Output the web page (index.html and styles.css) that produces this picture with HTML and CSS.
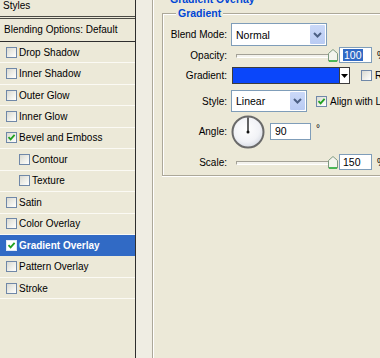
FILE: index.html
```html
<!DOCTYPE html>
<html>
<head>
<meta charset="utf-8">
<link rel="stylesheet" href="styles.css">
</head>
<body>
<div class="dialog">
  <aside class="styles">
    <div class="styles-head">Styles</div>
    <div class="blend-opts">Blending Options: Default</div>
    <ul class="fx-list">
      <li class="fx"><span class="cb"></span>Drop Shadow</li>
      <li class="fx"><span class="cb"></span>Inner Shadow</li>
      <li class="fx"><span class="cb"></span>Outer Glow</li>
      <li class="fx"><span class="cb"></span>Inner Glow</li>
      <li class="fx"><span class="cb on"><svg viewBox="0 0 9 9" width="9" height="9"><path d="M1.5 4.2 L3.6 6.4 L7.6 1.8" fill="none" stroke="#21a121" stroke-width="1.8"/></svg></span>Bevel and Emboss</li>
      <li class="fx sub"><span class="cb"></span>Contour</li>
      <li class="fx sub"><span class="cb"></span>Texture</li>
      <li class="fx"><span class="cb"></span>Satin</li>
      <li class="fx"><span class="cb"></span>Color Overlay</li>
      <li class="fx sel"><span class="cb on"><svg viewBox="0 0 9 9" width="9" height="9"><path d="M1.5 4.2 L3.6 6.4 L7.6 1.8" fill="none" stroke="#21a121" stroke-width="1.8"/></svg></span>Gradient Overlay</li>
      <li class="fx"><span class="cb"></span>Pattern Overlay</li>
      <li class="fx"><span class="cb"></span>Stroke</li>
    </ul>
  </aside>
  <div class="gutter"></div>
  <main class="panel">
    <div class="outer-title">Gradient Overlay</div>
    <section class="group">
      <div class="group-title">Gradient</div>

      <div class="row r-blend">
        <span class="lbl">Blend Mode:</span>
        <div class="select w-blend">
          <span class="sel-text">Normal</span>
          <span class="sel-btn"><svg viewBox="0 0 9 6" width="9" height="6"><path d="M1 1 L4.5 4.5 L8 1" fill="none" stroke="#4d6185" stroke-width="2"/></svg></span>
        </div>
      </div>

      <div class="row r-opacity">
        <span class="lbl">Opacity:</span>
        <div class="slider">
          <div class="track"></div>
          <svg class="thumb" viewBox="0 0 10 13" width="10" height="13"><path d="M0.5 12 V4.5 L5 0.5 L9.5 4.5 V12 Z" fill="#f4f4ee" stroke="#7e9a80"/><path d="M1 12 H9" stroke="#2fb33f" stroke-width="1.6"/></svg>
        </div>
        <div class="field w-num"><span class="hl">100</span></div>
        <span class="unit">%</span>
      </div>

      <div class="row r-grad">
        <span class="lbl">Gradient:</span>
        <div class="grad">
          <div class="grad-fill"></div>
          <div class="grad-arrow"><svg viewBox="0 0 7 4" width="7" height="4"><path d="M0 0 H7 L3.5 4 Z" fill="#000"/></svg></div>
        </div>
        <span class="cb cb-rev"></span><span class="cb-label">Reverse</span>
      </div>

      <div class="row r-style">
        <span class="lbl">Style:</span>
        <div class="select w-style">
          <span class="sel-text">Linear</span>
          <span class="sel-btn"><svg viewBox="0 0 9 6" width="9" height="6"><path d="M1 1 L4.5 4.5 L8 1" fill="none" stroke="#4d6185" stroke-width="2"/></svg></span>
        </div>
        <span class="cb on cb-align"><svg viewBox="0 0 9 9" width="9" height="9"><path d="M1.5 4.2 L3.6 6.4 L7.6 1.8" fill="none" stroke="#21a121" stroke-width="1.8"/></svg></span><span class="cb-label">Align with Layer</span>
      </div>

      <div class="row r-angle">
        <span class="lbl">Angle:</span>
        <svg class="dial" viewBox="0 0 34 34" width="34" height="34">
          <defs><radialGradient id="dg" cx="0.45" cy="0.4" r="0.6"><stop offset="0" stop-color="#ffffff"/><stop offset="0.7" stop-color="#f1f2f6"/><stop offset="1" stop-color="#d9dde6"/></radialGradient></defs>
          <circle cx="17" cy="17" r="15.5" fill="url(#dg)" stroke="#6a6a6a" stroke-width="2"/>
          <line x1="17" y1="17" x2="17" y2="2.5" stroke="#111" stroke-width="1.3"/>
          <circle cx="17" cy="17" r="1.5" fill="#111"/>
        </svg>
        <div class="field w-angle">90</div>
        <span class="deg">°</span>
      </div>

      <div class="row r-scale">
        <span class="lbl">Scale:</span>
        <div class="slider">
          <div class="track"></div>
          <svg class="thumb" viewBox="0 0 10 13" width="10" height="13"><path d="M0.5 12 V4.5 L5 0.5 L9.5 4.5 V12 Z" fill="#f4f4ee" stroke="#7e9a80"/><path d="M1 12 H9" stroke="#2fb33f" stroke-width="1.6"/></svg>
        </div>
        <div class="field w-num">150</div>
        <span class="unit">%</span>
      </div>
    </section>
  </main>
</div>
</body>
</html>
```

FILE: styles.css
```css
* { box-sizing: border-box; }
html, body {
  margin: 0;
  padding: 0;
  width: 380px;
  height: 358px;
  overflow: hidden;
  background: #ece9d8;
  font-family: "Liberation Sans", Arial, sans-serif;
  font-size: 10px;
  color: #000;
}
.dialog {
  display: flex;
  height: 358px;
}

/* ---------- left: styles list ---------- */
.styles {
  flex: none;
  width: 136px;
  border-right: 1px solid #2e2e2e;
  background: #ece9d8;
}
.styles-head {
  height: 19px;
  padding-left: 3px;
  line-height: 11px;
  border-bottom: 3px double #4a4a44;
}
.blend-opts {
  height: 23px;
  padding-left: 4px;
  line-height: 22px;
  border-bottom: 1px solid #2e2e2e;
}
.fx-list {
  list-style: none;
  margin: 0;
  padding: 0;
}
.fx {
  display: flex;
  align-items: center;
  height: 21.45px;
  padding-left: 6px;
  border-bottom: 1px solid #fbfaf4;
  white-space: nowrap;
}
.fx.sub { padding-left: 19px; }
.fx.sel {
  background: #316ac5;
  color: #fff;
  font-weight: bold;
  border-bottom-color: #316ac5;
}
.cb {
  flex: none;
  display: inline-flex;
  align-items: center;
  justify-content: center;
  width: 11px;
  height: 11px;
  margin-right: 2px;
  border: 1px solid #7088a8;
  background: linear-gradient(135deg, #d9d9d2 0%, #f1f1ec 60%, #ffffff 100%);
}
.fx.sel .cb { background: #fff; border-color: #dfe8f7; }

/* ---------- gutter ---------- */
.gutter {
  flex: none;
  width: 16px;
  background: #efede3;
}

/* ---------- right panel ---------- */
.panel {
  flex: 1;
  min-width: 0;
  overflow: hidden;
  border-left: 1px solid #aca899;
  box-shadow: inset 1px 0 0 #fff;
  padding-left: 9px;
}
.outer-title {
  margin-top: -7px;
  margin-left: 8px;
  height: 13px;
  line-height: 13px;
  font-weight: bold;
  font-size: 10.5px;
  color: #0046d5;
  white-space: nowrap;
}
.group {
  width: 260px;
  margin-top: 7px;
  padding-bottom: 4px;
  border: 1px solid #aca899;
  box-shadow: inset 1px 1px 0 #fff, 0 1px 0 #fff;
}
.group-title {
  width: fit-content;
  margin-top: -7px;
  margin-left: 13px;
  padding: 0 2px;
  height: 13px;
  line-height: 13px;
  font-weight: bold;
  font-size: 10.5px;
  color: #0046d5;
  background: #ece9d8;
}
.row {
  display: flex;
  align-items: center;
  white-space: nowrap;
}
.lbl {
  flex: none;
  width: 64px;
  text-align: right;
  margin-right: 4px;
}
.r-blend { margin-top: 3px; height: 23px; }
.r-opacity { margin-top: 1px; height: 16px; }
.r-grad { margin-top: 4px; height: 17px; }
.r-style { margin-top: 6px; height: 22px; }
.r-angle { margin-top: 3px; height: 33px; }
.r-scale { margin-top: 5px; height: 18px; }

/* select */
.select {
  flex: none;
  display: flex;
  align-items: stretch;
  height: 100%;
  border: 1px solid #7f9db9;
  background: #fff;
  padding: 1px;
}
.w-blend { width: 96px; }
.w-style { width: 76px; }
.sel-text {
  flex: 1;
  display: flex;
  align-items: center;
  padding-left: 3px;
  font-size: 10.5px;
}
.sel-btn {
  flex: none;
  width: 15px;
  display: flex;
  align-items: center;
  justify-content: center;
  background: linear-gradient(180deg, #cbd9f8 0%, #b9cbf3 100%);
  border-radius: 1px;
}

/* slider */
.slider {
  flex: none;
  position: relative;
  width: 108px;
  height: 100%;
  display: flex;
  align-items: center;
}
.track {
  margin-left: 5px;
  width: 99px;
  height: 4px;
  border: 1px solid;
  border-color: #a3a196 #ffffff #ffffff #a3a196;
  background: #f3f2ec;
  margin-top: 2px;
}
.thumb {
  position: absolute;
  left: 97px;
  top: 50%;
  margin-top: -6px;
}

/* fields */
.field {
  flex: none;
  height: 16px;
  border: 1px solid #7f9db9;
  background: #fff;
  padding-left: 3px;
  line-height: 14px;
  font-size: 10.5px;
}
.w-num { width: 33px; }
.w-angle { width: 41px; margin-left: 5px; height: 17px; line-height: 15px; padding-left: 4px; }
.hl { background: #316ac5; color: #fff; padding: 0 1px; }
.unit { margin-left: 5px; }
.deg { margin-left: 5px; margin-top: -6px; }

/* gradient swatch */
.grad {
  flex: none;
  display: flex;
  width: 118px;
  height: 17px;
  margin-left: 1px;
  border: 1px solid #3c3c3c;
  background: #fff;
}
.grad-fill {
  flex: 1;
  background: #0a46fa;
}
.grad-arrow {
  flex: none;
  width: 10px;
  border-left: 1px solid #3c3c3c;
  display: flex;
  align-items: center;
  justify-content: center;
  background: #fff;
}
.cb-rev { margin-left: 11px; }
.cb-align { margin-left: 9px; }
.cb-label { margin-left: 1px; }

/* dial */
.dial { flex: none; margin-left: 0; }
```
